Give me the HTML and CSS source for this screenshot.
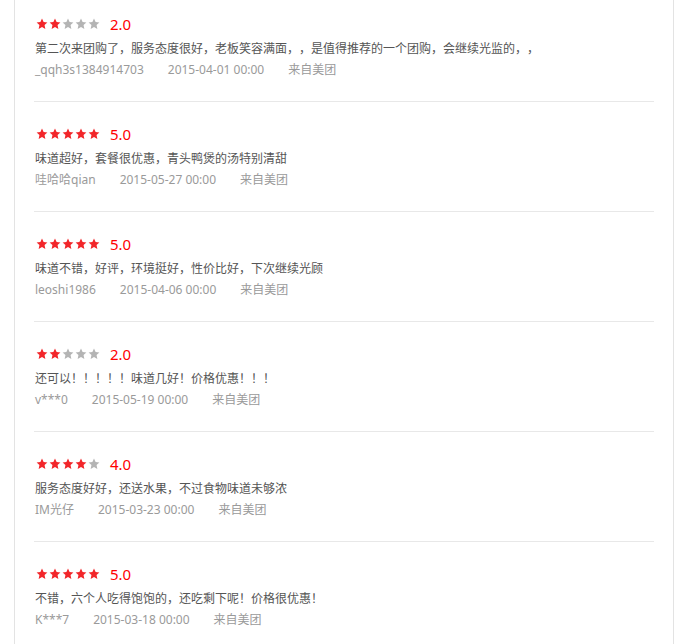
FILE: index.html
```html
<!DOCTYPE html>
<html lang="zh-CN">
<head>
  <meta charset="UTF-8">
  <title>评价</title>
  <link rel="stylesheet" href="styles.css">
</head>
<body>

<svg class="defs" width="0" height="0" aria-hidden="true">
  <symbol id="star" viewBox="0 0 24 24">
    <polygon points="12,1.2 15.2,8.2 22.8,9 17.1,14.2 18.7,21.8 12,17.9 5.3,21.8 6.9,14.2 1.2,9 8.8,8.2"/>
  </symbol>
</svg>

<div class="wrap">
  <ul class="reviews">
    <li class="review">
      <div class="rate">
        <span class="stars">
          <svg class="star on"><use href="#star"/></svg><svg class="star on"><use href="#star"/></svg><svg class="star"><use href="#star"/></svg><svg class="star"><use href="#star"/></svg><svg class="star"><use href="#star"/></svg>
        </span>
        <span class="score">2.0</span>
      </div>
      <p class="text">第二次来团购了，服务态度很好，老板笑容满面，，是值得推荐的一个团购，会继续光监的，，</p>
      <div class="meta"><span>_qqh3s1384914703</span><span>2015-04-01 00:00</span><span>来自美团</span></div>
    </li>
    <li class="review">
      <div class="rate">
        <span class="stars">
          <svg class="star on"><use href="#star"/></svg><svg class="star on"><use href="#star"/></svg><svg class="star on"><use href="#star"/></svg><svg class="star on"><use href="#star"/></svg><svg class="star on"><use href="#star"/></svg>
        </span>
        <span class="score">5.0</span>
      </div>
      <p class="text">味道超好，套餐很优惠，青头鸭煲的汤特别清甜</p>
      <div class="meta"><span>哇哈哈qian</span><span>2015-05-27 00:00</span><span>来自美团</span></div>
    </li>
    <li class="review">
      <div class="rate">
        <span class="stars">
          <svg class="star on"><use href="#star"/></svg><svg class="star on"><use href="#star"/></svg><svg class="star on"><use href="#star"/></svg><svg class="star on"><use href="#star"/></svg><svg class="star on"><use href="#star"/></svg>
        </span>
        <span class="score">5.0</span>
      </div>
      <p class="text">味道不错，好评，环境挺好，性价比好，下次继续光顾</p>
      <div class="meta"><span>leoshi1986</span><span>2015-04-06 00:00</span><span>来自美团</span></div>
    </li>
    <li class="review">
      <div class="rate">
        <span class="stars">
          <svg class="star on"><use href="#star"/></svg><svg class="star on"><use href="#star"/></svg><svg class="star"><use href="#star"/></svg><svg class="star"><use href="#star"/></svg><svg class="star"><use href="#star"/></svg>
        </span>
        <span class="score">2.0</span>
      </div>
      <p class="text">还可以！！！！！味道几好！价格优惠！！！</p>
      <div class="meta"><span>v***0</span><span>2015-05-19 00:00</span><span>来自美团</span></div>
    </li>
    <li class="review">
      <div class="rate">
        <span class="stars">
          <svg class="star on"><use href="#star"/></svg><svg class="star on"><use href="#star"/></svg><svg class="star on"><use href="#star"/></svg><svg class="star on"><use href="#star"/></svg><svg class="star"><use href="#star"/></svg>
        </span>
        <span class="score">4.0</span>
      </div>
      <p class="text">服务态度好好，还送水果，不过食物味道未够浓</p>
      <div class="meta"><span>IM光仔</span><span>2015-03-23 00:00</span><span>来自美团</span></div>
    </li>
    <li class="review">
      <div class="rate">
        <span class="stars">
          <svg class="star on"><use href="#star"/></svg><svg class="star on"><use href="#star"/></svg><svg class="star on"><use href="#star"/></svg><svg class="star on"><use href="#star"/></svg><svg class="star on"><use href="#star"/></svg>
        </span>
        <span class="score">5.0</span>
      </div>
      <p class="text">不错，六个人吃得饱饱的，还吃剩下呢！价格很优惠！</p>
      <div class="meta"><span>K***7</span><span>2015-03-18 00:00</span><span>来自美团</span></div>
    </li>
  </ul>
</div>

</body>
</html>
```

FILE: styles.css
```css
*{box-sizing:border-box}
html,body{height:100%}
body{margin:0;padding:0;background:#fff;font-family:'Noto Sans','Noto Sans CJK SC',sans-serif;font-size:12px;color:#555;overflow:hidden}
.defs{position:absolute;width:0;height:0;overflow:hidden}
.wrap{width:660px;min-height:100%;margin-left:14px;padding:0 19px;border-left:1px solid #e3e3e3;border-right:1px solid #e3e3e3}
.reviews{list-style:none;margin:-8px 0 0;padding:0}
.review{padding:22px 1px 21px;border-bottom:1px solid #e8e8e8}
.rate{display:flex;align-items:center;height:20px;margin-bottom:2px}
.stars{display:flex;gap:1px;padding-left:1px}
.star{width:12px;height:12px;fill:#b4b4b4}
.star.on{fill:#f2262a}
.score{margin-left:10px;font-size:15px;color:#f00;line-height:20px}
.text{margin:0;line-height:24px;color:#555;font-family:'Noto Sans CJK SC',sans-serif;text-spacing-trim:space-all}
.meta{display:flex;gap:24px;line-height:20px;color:#9a9a9a}
```
